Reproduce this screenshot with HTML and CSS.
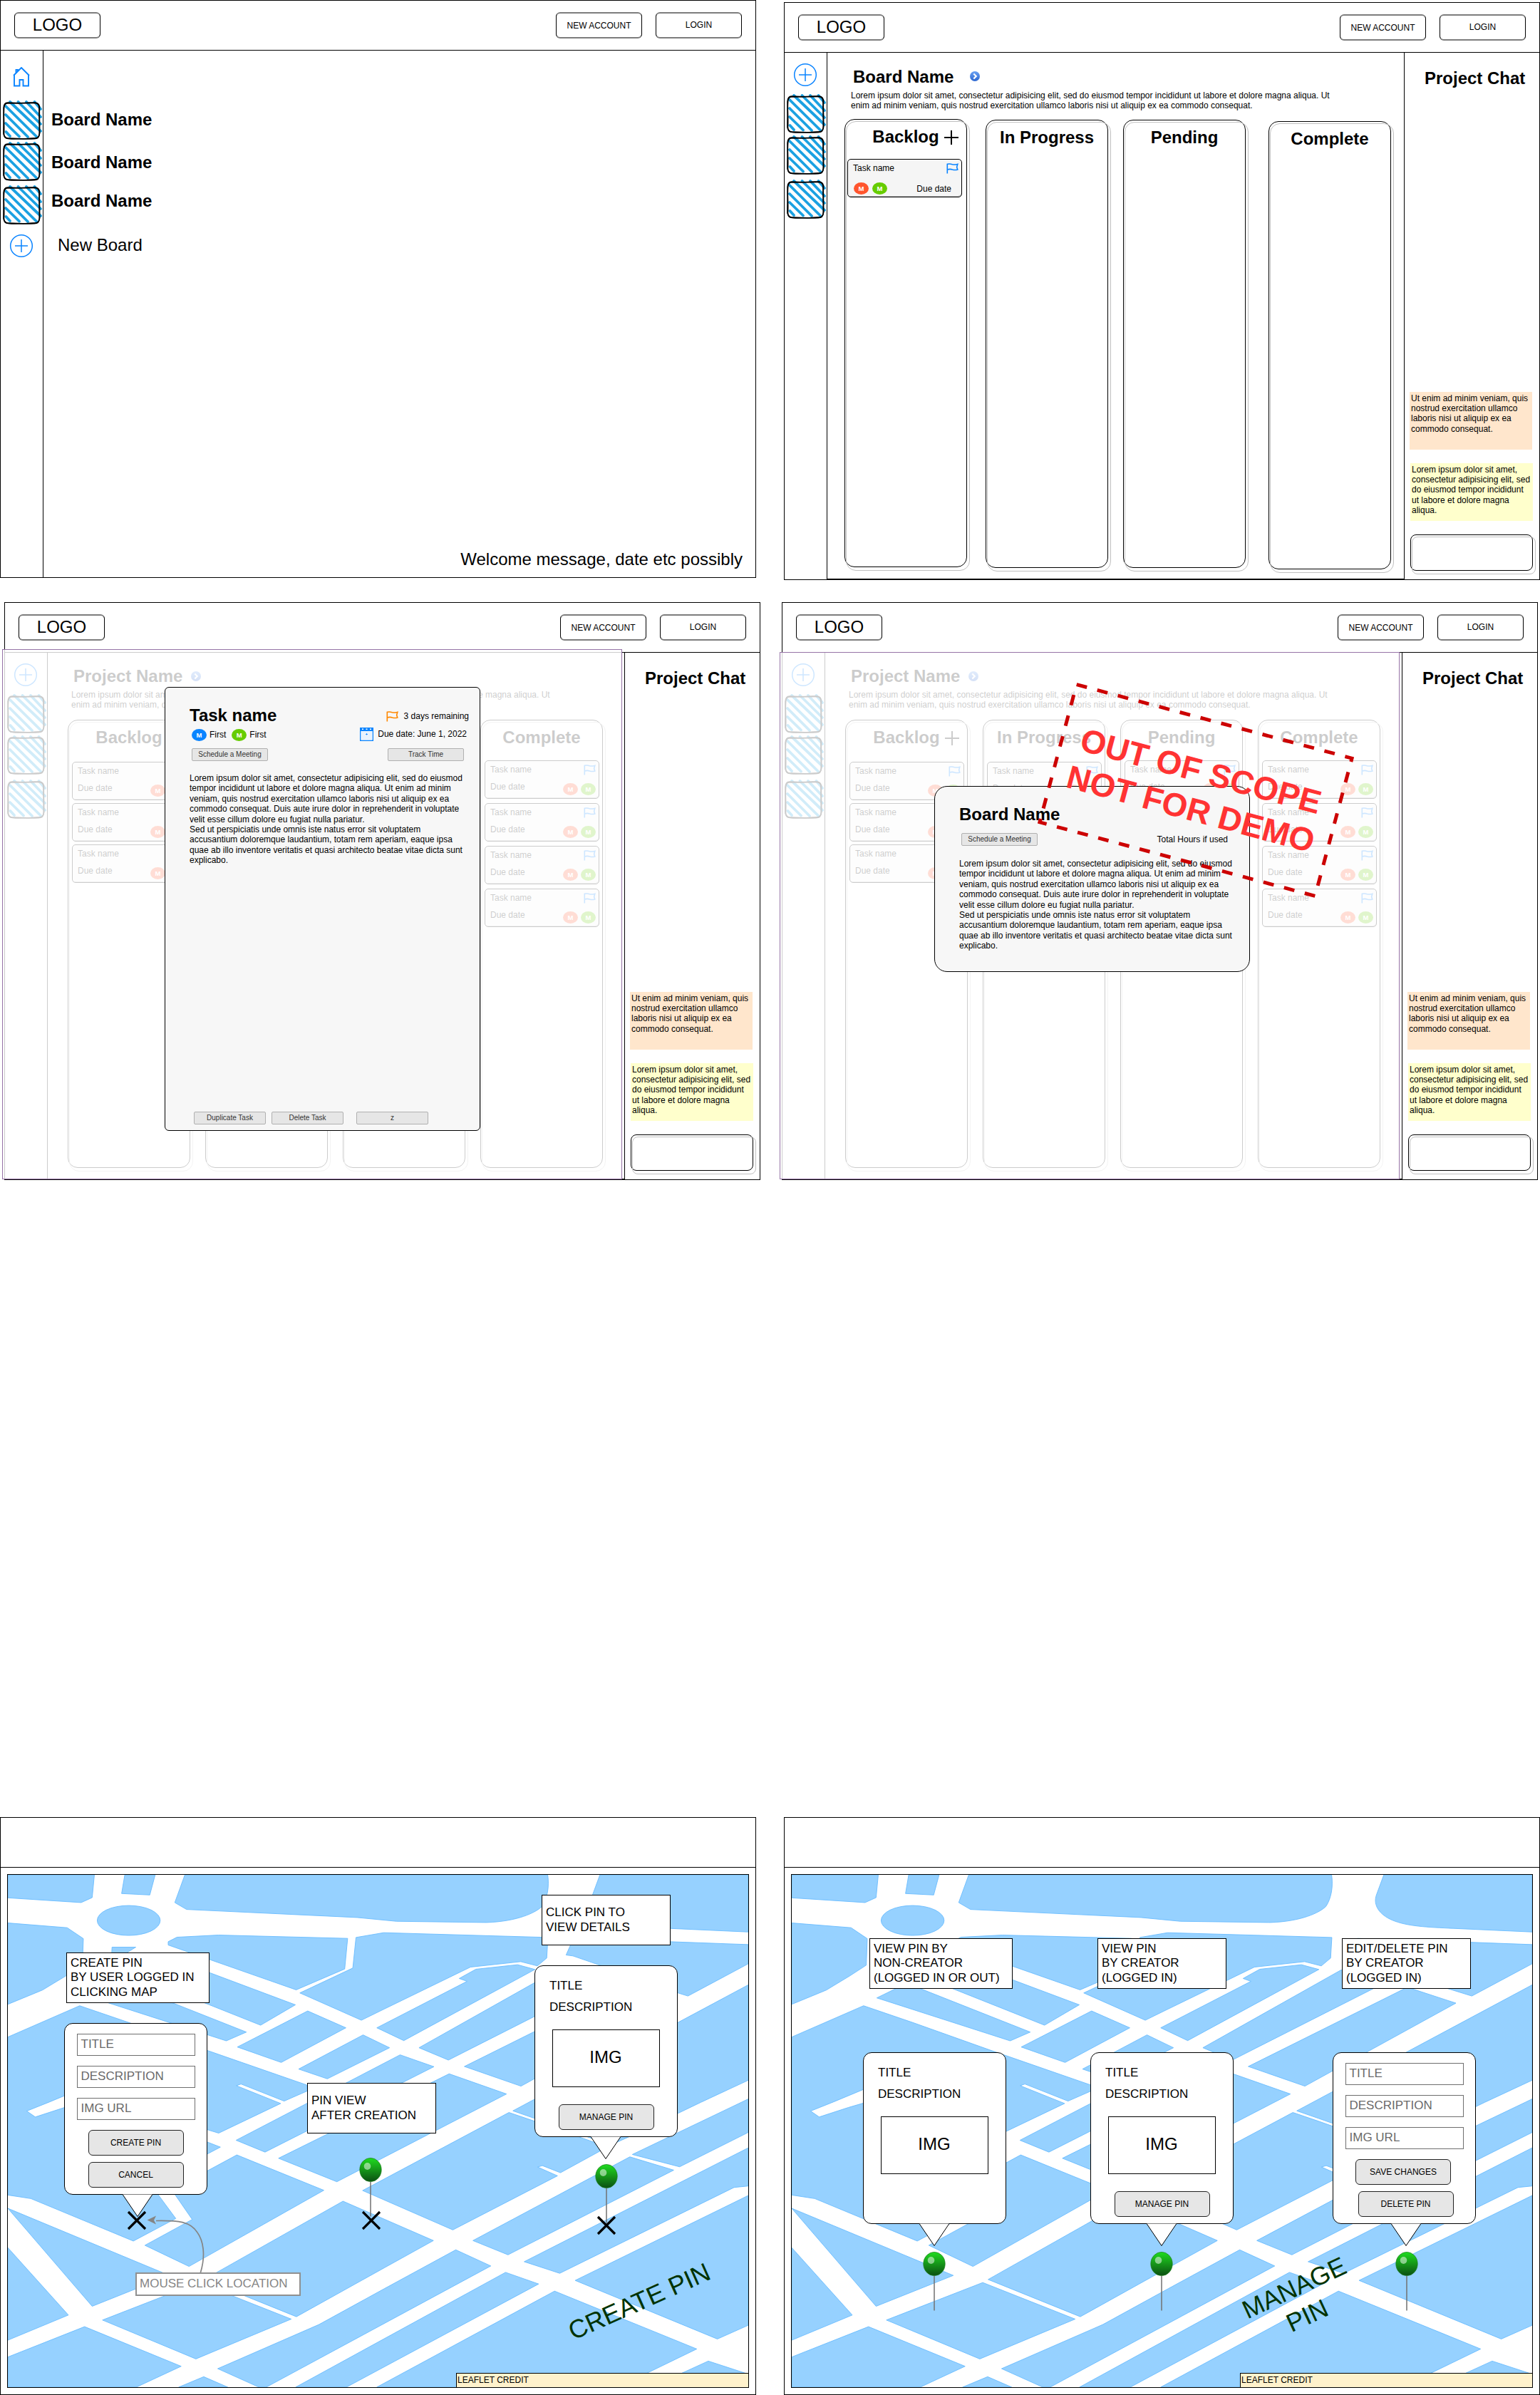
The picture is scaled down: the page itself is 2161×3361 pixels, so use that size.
FILE: index.html
```html
<!DOCTYPE html>
<html lang="en">
<head>
<meta charset="utf-8">
<title>Project board wireframes</title>
<link rel="stylesheet" href="styles.css">
</head>
<body>
<svg class="defs" width="0" height="0" aria-hidden="true">
  <defs>
    <linearGradient id="ball" x1="0" y1="0" x2="0" y2="1"><stop offset="0" stop-color="#1fdc1f"/><stop offset="1" stop-color="#0b4f12"/></linearGradient>
    <linearGradient id="blueball" x1="0" y1="0" x2="0" y2="1"><stop offset="0" stop-color="#6ba2f3"/><stop offset="1" stop-color="#2c66d0"/></linearGradient>
    <symbol id="i-plus" viewBox="0 0 34 34"><g fill="none" stroke="#0a84ff" stroke-width="1.5"><circle cx="17" cy="17" r="15.3"/><path d="M17 8v18M8 17h18"/></g></symbol>
    <symbol id="i-home" viewBox="0 0 24 28"><path d="M1 12 12 1 23 12M4.500 8.500V4H7V6M2 11.500V26.500H9.500V18H14.500V26.500H22V11.500" fill="none" stroke="#0a84ff" stroke-width="1.900"/></symbol>
    <symbol id="i-hatch" viewBox="-3 -3 58 58">
      <path d="M3.500 41 9 47M3 29 22 47.500M3 17 34 48M3 5 46 47.500M9 -1 52 40M20.500 -1 52 30M32 -1 52 20M43.500 -1 52 9" stroke="#1ba1e2" stroke-width="3.800" stroke-linecap="round" fill="none"/>
      <path d="M7 .8C22 1.600 34-.6 45 .5 49 1 50.600 3 50.400 8 49.600 20 51.300 32 50.200 44 50 48.500 48 50.600 43 50.500 30 51.600 18 50 6 50.200 2 50 .3 48 .4 43 1.300 30-.6 18 .6 7 .8 2.500 3 .3 7 .8Z" fill="none" stroke="#000" stroke-width="1.800"/>
      <path d="M6 0C20 .2 32 1.300 44 0 48.500 .4 49.700 3 49.800 7 50.800 19 49.600 31 50.800 43 50.300 48 47.500 50 43 50 30 50.300 18 51.600 8 50.800 3 50.500 1 48.500 0 44-.6 31 1.200 20 0 8 0 3 2 0 6 0Z" fill="none" stroke="#000" stroke-width="1.300"/>
    </symbol>
    <symbol id="i-go" viewBox="0 0 14 14"><circle cx="7" cy="7" r="7" fill="url(#blueball)"/><path d="M5.300 3.400 8.800 7 5.300 10.600" fill="none" stroke="#fff" stroke-width="2.200"/></symbol>
    <symbol id="i-flag" viewBox="0 0 17 15"><path d="M1.300 14.500V1.300C5 .4 6.500 1 8.500 1.700 11 2.500 13 2 15.800 1.400L14.600 5.400 15.800 9C13 9.800 11 9.800 8.500 9 6.500 8.300 4 8.200 1.300 9" fill="none" stroke="currentColor" stroke-width="1.600"/></symbol>
    <symbol id="i-cal" viewBox="0 0 19 19"><path d="M0 0H19V19H0ZM1.500 5V17.500H17.500V5Z" fill="#0a84ff" fill-rule="evenodd"/><path d="M1.500 5H17.500V17.500H1.500Z" fill="#e9f3fe"/><path d="M3 1.500h2v1.500H3zM8.500 1.500h2v1.500h-2zM14 1.500h2v1.500h-2z" fill="#fff"/><path d="M9.500 8V10.500M8 9.500H11" stroke="#0a84ff" stroke-width=".8"/></symbol>
    <symbol id="i-pin" viewBox="0 0 32 84"><path d="M16 34V82.500" stroke="#707070" stroke-width="1.500"/><ellipse cx="16" cy="17" rx="15.200" ry="16.600" fill="url(#ball)" stroke="#1a7d1a" stroke-width=".7"/><ellipse cx="11.500" cy="12" rx="4.800" ry="5" fill="#fff" fill-opacity=".5"/></symbol>
    <symbol id="i-x" viewBox="0 0 28 28"><path d="M2 2 26 26M26 2 2 26" stroke="#000" stroke-width="3.200"/></symbol>
    <symbol id="i-tip" viewBox="0 0 44 33"><path d="M1 .5 22 31.500 43 .5" fill="#fff" stroke="#000"/></symbol>
    <symbol id="map" viewBox="31 271 3020 2160" preserveAspectRatio="none">
      <g fill="#96d1ff" stroke="#66bbff" stroke-width="2.600">
        <path d="M31 271H384L375 367 330 388 31 368ZM508 271H632L610 356 495 350Z"/>
        <path d="M753 271 712 388 760 417 1456 451 1616 467 1982 472C2110 468 2185 430 2210 404 2232 370 2240 320 2233 271Z"/>
        <ellipse cx="524" cy="463.500" rx="128.500" ry="63"/>
        <path d="M31 474 273 494 339 540 335 652 268 697 172 757 31 817ZM456 576H553L453 640Z"/>
        <path d="M685 553 721 534 890 525 1417 539 1405 668 1207 756 685 567Z"/>
        <path d="M1451 535 1564 515 2234 535 2229 622 2191 655 2123 637 1918 660 1568 836 1473 884 1222 769 1438 664Z"/>
        <path d="M2446 271 2416 355C2400 400 2430 440 2480 462 2540 488 2620 492 2731 497L3051 512V271Z"/>
        <path d="M2338 539 2308 609 2336 613 2454 655 2680 742 2805 782 3051 646V565L2731 553Z"/>
        <path d="M1204 819 1062 905 600 715 700 624ZM378 790 922 971 1004 934 500 728Z"/>
        <path d="M31 955 324 823 528 895 843 1011 1250 1157 1253 1182 1158 1225 982 1153 963 1160 1144 1235 891 1360 843 1345 700 1290 500 1400 643 1618 716 1720 543 1815 125 1636 31 1621Z"/>
        <path d="M843 1397 898 1419 843 1449 800 1470 780 1375ZM700 1600 783 1724 590 1833 770 1922 1320 1601 965 1452 843 1520Z"/>
        <path fill="#fff" d="M500 1100 200 1229 108 1267 143 1292 262 1252 500 1180Z"/>
        <path d="M1254 845 1410 916 1146 1062 967 997ZM1480 946 1588 1000 1334 1131 1217 1090Z"/>
        <path d="M1536 916 1904 720 1872 708 1940 669 2110 650 2181 670 1646 970Z"/>
        <path d="M1708 1000 2272 672 2420 742 1828 1052ZM1893 1079 2542 745 2740 812 2124 1162Z"/>
        <path d="M962 1390 1631 1030 1769 1080 1080 1440ZM1135 1466 1831 1110 2065 1195 1373 1565Z"/>
        <path d="M1478 1602 2075 1273 2180 1310 2440 1405 2446 1436 2285 1527 2211 1497 2192 1503 2273 1540 1846 1768Z"/>
        <path d="M2091 1266 3051 735V1137L2858 1230 2568 1374 2490 1410 2180 1298Z"/>
        <path d="M2578 1450 3023 1230 3051 1216V1357L2771 1502ZM1928 1813 2568 1460 2747 1516 2071 1873Z"/>
        <path d="M3051 1422 2137 1902 2282 1951 2993 1589 3051 1583ZM3051 1623 2345 1981 2925 2228 3051 2170Z"/>
        <path d="M2261 2026 2841 2270 2520 2431H1536ZM2888 2321 3051 2376V2431H2655Z"/>
        <path d="M2061 1947 2196 1996 1412 2431H1205ZM1858 1852 2001 1920 1085 2431H1055L887 2353 1300 2167 1568 2015Z"/>
        <path d="M1398 1647 1767 1813 1568 1927 1208 2134 832 1977ZM810 1990 1187 2144 798 2312 417 2148Z"/>
        <path d="M31 1677 690 1960 375 2090ZM31 1843 278 2127 31 2233ZM31 2304 344 2176 738 2343 555 2431H31ZM830 2387 728 2431H928Z"/>
      </g>
    </symbol>
  </defs>
</svg>

<div class="row row-top">
  <section class="frame">
    <header class="bar"><div class="btn logo">LOGO</div><div class="btn push">NEW ACCOUNT</div><div class="btn login">LOGIN</div></header>
    <div class="body">
      <nav class="side home">
        <svg class="house"><use href="#i-home"/></svg>
        <svg class="sq"><use href="#i-hatch"/></svg><svg class="sq"><use href="#i-hatch"/></svg><svg class="sq"><use href="#i-hatch"/></svg>
        <svg class="add"><use href="#i-plus"/></svg>
      </nav>
      <main class="list">
        <h2>Board Name</h2><h2>Board Name</h2><h2>Board Name</h2>
        <p class="new">New Board</p>
        <p class="welcome">Welcome message, date etc possibly</p>
      </main>
    </div>
  </section>

  <section class="frame second">
    <header class="bar"><div class="btn logo">LOGO</div><div class="btn push">NEW ACCOUNT</div><div class="btn login">LOGIN</div></header>
    <div class="body">
      <nav class="side">
        <svg class="add"><use href="#i-plus"/></svg>
        <svg class="sq"><use href="#i-hatch"/></svg><svg class="sq"><use href="#i-hatch"/></svg><svg class="sq"><use href="#i-hatch"/></svg>
      </nav>
      <main class="board live">
        <h2 class="name">Board Name<svg class="go"><use href="#i-go"/></svg></h2>
        <p class="desc">Lorem ipsum dolor sit amet, consectetur adipisicing elit, sed do eiusmod tempor incididunt ut labore et dolore magna aliqua. Ut<br>enim ad minim veniam, quis nostrud exercitation ullamco laboris nisi ut aliquip ex ea commodo consequat.</p>
        <div class="cols">
          <div class="col"><h2>Backlog</h2><svg class="cross" viewBox="0 0 20 20"><path d="M10 0V20M0 10H20" stroke="#000" stroke-width="2"/></svg>
            <article class="card wide"><div class="r1">Task name<svg class="flag"><use href="#i-flag"/></svg></div><div class="r2"><i class="av red">M</i><i class="av green">M</i><span>Due date</span></div></article>
          </div>
          <div class="col"><h2>In Progress</h2></div>
          <div class="col"><h2>Pending</h2></div>
          <div class="col"><h2>Complete</h2></div>
        </div>
      </main>
      <aside class="chat">
        <h2>Project Chat</h2>
        <p class="msg peach">Ut enim ad minim veniam, quis<br>nostrud exercitation ullamco<br>laboris nisi ut aliquip ex ea<br>commodo consequat.</p>
        <p class="msg lemon">Lorem ipsum dolor sit amet,<br>consectetur adipisicing elit, sed<br>do eiusmod tempor incididunt<br>ut labore et dolore magna<br>aliqua.</p>
        <div class="entry"></div>
      </aside>
    </div>
  </section>
</div>

<div class="row row-mid">
  <section class="frame">
    <header class="bar"><div class="btn logo">LOGO</div><div class="btn push">NEW ACCOUNT</div><div class="btn login">LOGIN</div></header>
    <div class="body">
      <nav class="side">
        <svg class="add"><use href="#i-plus"/></svg>
        <svg class="sq"><use href="#i-hatch"/></svg><svg class="sq"><use href="#i-hatch"/></svg><svg class="sq"><use href="#i-hatch"/></svg>
      </nav>
      <main class="board">
        <h2 class="name">Project Name<svg class="go"><use href="#i-go"/></svg></h2>
        <p class="desc">Lorem ipsum dolor sit amet, consectetur adipisicing elit, sed do eiusmod tempor incididunt ut labore et dolore magna aliqua. Ut<br>enim ad minim veniam, quis nostrud exercitation ullamco laboris nisi ut aliquip ex ea commodo consequat.</p>
        <div class="cols">
          <div class="col tight"><h2>Backlog</h2>
            <article class="card"><div class="r1">Task name</div><div class="r2"><span>Due date</span><i class="av red">M</i><i class="av green">M</i></div></article>
            <article class="card"><div class="r1">Task name</div><div class="r2"><span>Due date</span><i class="av red">M</i><i class="av green">M</i></div></article>
            <article class="card"><div class="r1">Task name</div><div class="r2"><span>Due date</span><i class="av red">M</i><i class="av green">M</i></div></article>
          </div>
          <div class="col"></div>
          <div class="col"></div>
          <div class="col"><h2>Complete</h2>
            <article class="card"><div class="r1">Task name<svg class="flag"><use href="#i-flag"/></svg></div><div class="r2"><span>Due date</span><i class="av red">M</i><i class="av green">M</i></div></article>
            <article class="card"><div class="r1">Task name<svg class="flag"><use href="#i-flag"/></svg></div><div class="r2"><span>Due date</span><i class="av red">M</i><i class="av green">M</i></div></article>
            <article class="card"><div class="r1">Task name<svg class="flag"><use href="#i-flag"/></svg></div><div class="r2"><span>Due date</span><i class="av red">M</i><i class="av green">M</i></div></article>
            <article class="card"><div class="r1">Task name<svg class="flag"><use href="#i-flag"/></svg></div><div class="r2"><span>Due date</span><i class="av red">M</i><i class="av green">M</i></div></article>
          </div>
        </div>
      </main>
      <aside class="chat">
        <h2>Project Chat</h2>
        <p class="msg peach">Ut enim ad minim veniam, quis<br>nostrud exercitation ullamco<br>laboris nisi ut aliquip ex ea<br>commodo consequat.</p>
        <p class="msg lemon">Lorem ipsum dolor sit amet,<br>consectetur adipisicing elit, sed<br>do eiusmod tempor incididunt<br>ut labore et dolore magna<br>aliqua.</p>
        <div class="entry"></div>
      </aside>
    </div>
    <div class="veil"></div>
    <div class="modal task">
      <div class="m1"><h2>Task name</h2><span class="meta"><svg class="flag orange"><use href="#i-flag"/></svg>3 days remaining</span></div>
      <div class="m2"><i class="av blue">M</i><span class="who">First</span><i class="av green">M</i><span class="who">First</span><span class="meta"><svg class="cal"><use href="#i-cal"/></svg>Due date: June 1, 2022</span></div>
      <div class="m3"><div class="mini">Schedule a Meeting</div><div class="mini">Track Time</div></div>
      <p>Lorem ipsum dolor sit amet, consectetur adipisicing elit, sed do eiusmod<br>tempor incididunt ut labore et dolore magna aliqua. Ut enim ad minim<br>veniam, quis nostrud exercitation ullamco laboris nisi ut aliquip ex ea<br>commodo consequat. Duis aute irure dolor in reprehenderit in voluptate<br>velit esse cillum dolore eu fugiat nulla pariatur.<br>Sed ut perspiciatis unde omnis iste natus error sit voluptatem<br>accusantium doloremque laudantium, totam rem aperiam, eaque ipsa<br>quae ab illo inventore veritatis et quasi architecto beatae vitae dicta sunt<br>explicabo.</p>
      <div class="m4"><div class="mini">Duplicate Task</div><div class="mini">Delete Task</div><div class="mini">z</div></div>
    </div>
  </section>

  <section class="frame second">
    <header class="bar"><div class="btn logo">LOGO</div><div class="btn push">NEW ACCOUNT</div><div class="btn login">LOGIN</div></header>
    <div class="body">
      <nav class="side">
        <svg class="add"><use href="#i-plus"/></svg>
        <svg class="sq"><use href="#i-hatch"/></svg><svg class="sq"><use href="#i-hatch"/></svg><svg class="sq"><use href="#i-hatch"/></svg>
      </nav>
      <main class="board">
        <h2 class="name">Project Name<svg class="go"><use href="#i-go"/></svg></h2>
        <p class="desc">Lorem ipsum dolor sit amet, consectetur adipisicing elit, sed do eiusmod tempor incididunt ut labore et dolore magna aliqua. Ut<br>enim ad minim veniam, quis nostrud exercitation ullamco laboris nisi ut aliquip ex ea commodo consequat.</p>
        <div class="cols">
          <div class="col tight"><h2>Backlog</h2><svg class="cross" viewBox="0 0 20 20"><path d="M10 0V20M0 10H20" stroke="#000" stroke-width="2"/></svg>
            <article class="card"><div class="r1">Task name<svg class="flag"><use href="#i-flag"/></svg></div><div class="r2"><span>Due date</span><i class="av red">M</i><i class="av green">M</i></div></article>
            <article class="card"><div class="r1">Task name</div><div class="r2"><span>Due date</span><i class="av red">M</i><i class="av green">M</i></div></article>
            <article class="card"><div class="r1">Task name</div><div class="r2"><span>Due date</span><i class="av red">M</i><i class="av green">M</i></div></article>
          </div>
          <div class="col tight"><h2>In Progress</h2>
            <article class="card"><div class="r1">Task name<svg class="flag"><use href="#i-flag"/></svg></div><div class="r2"><span>Due date</span><i class="av red">M</i><i class="av green">M</i></div></article>
          </div>
          <div class="col"><h2>Pending</h2>
            <article class="card"><div class="r1">Task name<svg class="flag"><use href="#i-flag"/></svg></div><div class="r2"><span>Due date</span><i class="av red">M</i><i class="av green">M</i></div></article>
          </div>
          <div class="col"><h2>Complete</h2>
            <article class="card"><div class="r1">Task name<svg class="flag"><use href="#i-flag"/></svg></div><div class="r2"><span>Due date</span><i class="av red">M</i><i class="av green">M</i></div></article>
            <article class="card"><div class="r1">Task name<svg class="flag"><use href="#i-flag"/></svg></div><div class="r2"><span>Due date</span><i class="av red">M</i><i class="av green">M</i></div></article>
            <article class="card"><div class="r1">Task name<svg class="flag"><use href="#i-flag"/></svg></div><div class="r2"><span>Due date</span><i class="av red">M</i><i class="av green">M</i></div></article>
            <article class="card"><div class="r1">Task name<svg class="flag"><use href="#i-flag"/></svg></div><div class="r2"><span>Due date</span><i class="av red">M</i><i class="av green">M</i></div></article>
          </div>
        </div>
      </main>
      <aside class="chat">
        <h2>Project Chat</h2>
        <p class="msg peach">Ut enim ad minim veniam, quis<br>nostrud exercitation ullamco<br>laboris nisi ut aliquip ex ea<br>commodo consequat.</p>
        <p class="msg lemon">Lorem ipsum dolor sit amet,<br>consectetur adipisicing elit, sed<br>do eiusmod tempor incididunt<br>ut labore et dolore magna<br>aliqua.</p>
        <div class="entry"></div>
      </aside>
    </div>
    <div class="veil low"></div>
    <div class="modal info">
      <h2>Board Name</h2>
      <div class="m3"><div class="mini">Schedule a Meeting</div><span>Total Hours if used</span></div>
      <p>Lorem ipsum dolor sit amet, consectetur adipisicing elit, sed do eiusmod<br>tempor incididunt ut labore et dolore magna aliqua. Ut enim ad minim<br>veniam, quis nostrud exercitation ullamco laboris nisi ut aliquip ex ea<br>commodo consequat. Duis aute irure dolor in reprehenderit in voluptate<br>velit esse cillum dolore eu fugiat nulla pariatur.<br>Sed ut perspiciatis unde omnis iste natus error sit voluptatem<br>accusantium doloremque laudantium, totam rem aperiam, eaque ipsa<br>quae ab illo inventore veritatis et quasi architecto beatae vitae dicta sunt<br>explicabo.</p>
    </div>
    <div class="stamp"><svg viewBox="0 0 400 200"><rect x="0" y="0" width="400" height="200" fill="none" stroke="#c00" stroke-width="5" stroke-dasharray="15 15"/></svg><b>OUT OF SCOPE<br>NOT FOR DEMO</b></div>
  </section>
</div>

<div class="row row-maps">
  <section class="frame">
    <header class="bar"></header>
    <div class="map">
      <svg class="ground"><use href="#map"/></svg>
      <div class="note n-create">CREATE PIN<br>BY USER LOGGED IN<br>CLICKING MAP</div>
      <div class="note n-view">PIN VIEW<br>AFTER CREATION</div>
      <div class="note n-click">CLICK PIN TO<br>VIEW DETAILS</div>
      <div class="bubble b-create">
        <div class="field">TITLE</div><div class="field">DESCRIPTION</div><div class="field">IMG URL</div>
        <div class="act">CREATE PIN</div><div class="act">CANCEL</div>
        <svg class="tip"><use href="#i-tip"/></svg>
      </div>
      <svg class="pin p-one"><use href="#i-pin"/></svg>
      <svg class="pin p-two"><use href="#i-pin"/></svg>
      <svg class="mark x-one"><use href="#i-x"/></svg>
      <svg class="mark x-two"><use href="#i-x"/></svg>
      <svg class="mark x-three"><use href="#i-x"/></svg>
      <div class="bubble b-show">
        <span>TITLE</span><span>DESCRIPTION</span><div class="img">IMG</div><div class="act">MANAGE PIN</div>
        <svg class="tip"><use href="#i-tip"/></svg>
      </div>
      <svg class="arrow" viewBox="0 0 90 84"><path d="M76.400 80.300C84 55 80 35 72 24 62 8 45 7 14 7.500" fill="none" stroke="#858585" stroke-width="1.700"/><path d="M1.500 6.500 14 .5 11 6.700 14 12.500Z" fill="#858585"/></svg>
      <div class="mouse">MOUSE CLICK LOCATION</div>
      <div class="caption c-create">CREATE PIN</div>
      <div class="credit">LEAFLET CREDIT</div>
    </div>
  </section>

  <section class="frame second">
    <header class="bar"></header>
    <div class="map">
      <svg class="ground"><use href="#map"/></svg>
      <div class="note n-a">VIEW PIN BY<br>NON-CREATOR<br>(LOGGED IN OR OUT)</div>
      <div class="note n-b">VIEW PIN<br>BY CREATOR<br>(LOGGED IN)</div>
      <div class="note n-c">EDIT/DELETE PIN<br>BY CREATOR<br>(LOGGED IN)</div>
      <div class="bubble b-a"><span>TITLE</span><span>DESCRIPTION</span><div class="img">IMG</div><svg class="tip"><use href="#i-tip"/></svg></div>
      <div class="bubble b-b"><span>TITLE</span><span>DESCRIPTION</span><div class="img">IMG</div><div class="act">MANAGE PIN</div><svg class="tip"><use href="#i-tip"/></svg></div>
      <div class="bubble b-c">
        <div class="field">TITLE</div><div class="field">DESCRIPTION</div><div class="field">IMG URL</div>
        <div class="act">SAVE CHANGES</div><div class="act">DELETE PIN</div>
        <svg class="tip"><use href="#i-tip"/></svg>
      </div>
      <svg class="pin p-a"><use href="#i-pin"/></svg>
      <svg class="pin p-b"><use href="#i-pin"/></svg>
      <svg class="pin p-c"><use href="#i-pin"/></svg>
      <div class="caption c-manage">MANAGE<br>PIN</div>
      <div class="credit">LEAFLET CREDIT</div>
    </div>
  </section>
</div>
</body>
</html>
```
FILE: styles.css
```css
* { box-sizing: border-box; }
body {
  margin: 0;
  width: 2161px;
  height: 3361px;
  overflow: hidden;
  background: #fff;
  color: #000;
  font: 12px/1.2 "Liberation Sans", Arial, Helvetica, sans-serif;
  white-space: nowrap;
}
h2, p { margin: 0; }
h2 { font-size: 24px; line-height: 29px; font-weight: 700; }
svg { display: block; flex: none; }
.defs { position: absolute; }

/* frames */
.row { display: flex; align-items: flex-start; }
.row-top { height: 845px; }
.row-mid { height: 1705px; padding-left: 6px; }
.row-maps { height: 811px; }
.frame {
  position: relative;
  flex: none;
  width: 1061px;
  height: 811px;
  border: 1px solid #000;
  display: flex;
  flex-direction: column;
}
.row-top .second { margin: 3px 0 0 39px; }
.row-mid .second { margin-left: 30px; }
.row-maps .second { margin-left: 39px; }
.bar {
  flex: none;
  height: 70px;
  padding: 16px 19px 0;
  display: flex;
  border-bottom: 1px solid #000;
}
.btn {
  width: 121px;
  height: 37px;
  border: 1px solid #000;
  border-width: 2px 1px;
  border-top-color: #7d7d7d;
  border-bottom-color: #7d7d7d;
  border-radius: 6px;
  text-align: center;
  line-height: 34px;
}
.logo { font-size: 24px; line-height: 32px; }
.push { margin-left: auto; }
.login { margin-left: 19px; line-height: 32px; }
.body { flex: 1; display: flex; }

/* sidebar */
.side { width: 60px; border-right: 1px solid #000; }
.sq { width: 58px; height: 58px; margin: 0 0 0 1px; }
.add { width: 34px; height: 34px; margin: 14px 0 10px 12px; }
.side .sq:nth-child(4) { margin-top: 4px; }
.home .house { width: 24px; height: 28px; margin: 23px 0 19px 17px; }
.home .sq:nth-child(4) { margin-top: 3px; }
.home .add { margin: 10px 0 0 12px; }
.list { flex: 1; display: flex; flex-direction: column; align-items: flex-start; padding: 82px 18px 11px 11px; }
.list h2:nth-child(2) { margin: 31px 0 25px; }
.list p { font-size: 24px; line-height: 29px; }
.new { margin: 33px 0 0 9px; }
.list .welcome { margin: auto 0 0; align-self: flex-end; }

/* board */
.board { width: 809px; border-bottom: 1px solid #000; padding-top: 18px; }
.name { display: flex; align-items: center; padding-left: 36px; }
.live .name { padding-top: 1px; }
.go { width: 14px; height: 14px; margin: 0 0 0 12px; }
.live .go { margin: -1px 0 0 23px; }
.desc { margin: 5px 0 0 33px; line-height: 14.4px; }
.cols { display: flex; gap: 21px; margin: 13px 0 0 28px; }
.live .cols { margin: 11.5px 0 0 24px; gap: 0; }
.live .col:nth-child(2) { margin: .5px 21px 0 26px; }
.live .col:nth-child(3) { margin: .5px 32px 0 0; }
.live .col:nth-child(4) { margin-top: 3px; }
.col {
  position: relative;
  width: 172px;
  height: 629px;
  flex: none;
  border: 1px solid #000;
  border-radius: 14px;
  padding: 9px 4px 0;
  background: #fff;
}
/* offset outline that doubles the box edge */
.col::before, .entry::before {
  content: "";
  position: absolute;
  left: 1px;
  top: 2px;
  width: 172px;
  height: 629px;
  border: 1px solid #c0c0c0;
  border-radius: 14px;
}
.col h2 { text-align: center; margin-bottom: 18px; }
.cross { position: absolute; left: 139px; top: 15px; width: 20px; height: 20px; }
.card {
  position: relative;
  width: 161px;
  height: 54px;
  margin: 0 0 6px 1px;
  border: 1px solid #000;
  border-radius: 5px;
  background: #f5f5f5;
  padding: 5px 4px 0 7px;
  box-shadow: inset -1px -2px 0 -1px #bbb;
}
.tight h2 { margin-bottom: 20px; }
.tight .card { margin-bottom: 4px; }
.live .card { margin-left: -1px; margin-top: -1px; }
.r1 { display: flex; height: 24px; justify-content: space-between; line-height: 14.4px; }
.r2 { display: flex; align-items: center; height: 17px; }
.r2 span { margin: -3px auto 0 0; }
.r2 .av { margin: 4px 0 0 4px; }
.live .r2 { padding: 3px 0 0; height: 20px; }
.live .r2 .av { margin: 0 4px 0 1px; }
.live .r2 span { margin: 0 10px 0 auto; }
.flag { width: 17px; height: 15px; color: #0a84ff; }
.av {
  width: 21px;
  height: 17px;
  border-radius: 50%;
  color: #fff;
  font: bold 9.5px/18px "Liberation Sans", Arial, sans-serif;
  text-align: center;
  flex: none;
}
.red { background: #ff552d; }
.green { background: #66cc00; }
.blue { background: #0a84ff; }

/* chat */
.chat { flex: 1; border-left: 1px solid #000; display: flex; flex-direction: column; padding: 21px 9px 12px 7px; }
.chat h2 { padding-left: 21px; }
.msg { width: 172px; height: 81px; padding: 1.5px 2px; line-height: 14.4px; margin-bottom: 19px; }
.peach { background: #ffe6cc; margin-top: auto; }
.lemon { background: #ffffcc; margin-left: 1px; }
.entry { position: relative; width: 172px; height: 51px; margin-left: 1px; border: 1px solid #000; border-radius: 8px; }
.entry::before { height: 51px; border-radius: 8px; }

/* overlays */
.veil { position: absolute; left: -4px; top: 65px; width: 870px; height: 744px; border: 1px solid #9673a6; background: rgba(255,255,255,.8); }
.veil.low { top: 69px; height: 740px; }
.modal { position: absolute; width: 443px; background: #f7f7f7; border: 1px solid #000; }
.modal p { line-height: 14.4px; }
.task { left: 224px; top: 118px; height: 623px; border-radius: 6px; padding: 24px 15px 0 34px; }
.m1, .m2, .m3, .m4 { display: flex; align-items: center; }
.m1 { justify-content: space-between; }
.m2 { height: 19px; margin: 4px 3px 0 3px; }
.meta { display: flex; align-items: center; margin-left: auto; }
.m1 .meta { margin-top: 3px; }
.m2 .meta { margin-top: -2px; }
.orange { color: #ff8800; margin-right: 8px; }
.cal { width: 19px; height: 19px; margin-right: 6px; }
.who { margin: 0 8px 0 4px; }
.m3 { margin: 9px 7px 17px 3px; justify-content: space-between; }
.mini {
  width: 107px;
  height: 18px;
  border: 1px solid #b0b0b0;
  border-radius: 2px;
  background: #e6e6e6;
  color: #333;
  font-size: 10px;
  line-height: 16px;
  text-align: center;
}
.m4 { margin: 345px 0 0 6px; gap: 8px; }
.m4 .mini { width: 101px; }
.m4 .mini:last-child { margin-left: 10px; }
.info { left: 213px; top: 257px; height: 261px; border-radius: 18px; padding: 24px 15px 0 34px; }
.info .m3 { margin: 12px 15px 18px 3px; }
.stamp {
  position: absolute;
  left: 380px;
  top: 163px;
  width: 400px;
  height: 200px;
  transform: rotate(15deg);
  display: grid;
  place-items: center;
  text-align: center;
  color: #ff3333;
  font-size: 46px;
  line-height: 55px;
}
.stamp svg { position: absolute; inset: 0; width: 400px; height: 200px; overflow: visible; }

/* maps */
.map { position: relative; width: 1041px; height: 721px; margin: 9px 0 0 9px; border: 1px solid #000; background: #fff; }
.ground { width: 1039px; height: 719px; }
.note {
  position: absolute;
  width: 181px;
  height: 71px;
  padding-left: 5px;
  background: #fff;
  border: 1px solid #000;
  font-size: 17px;
  line-height: 20.4px;
  display: flex;
  align-items: center;
}
.n-create { left: 82px; top: 109px; width: 201px; }
.n-view { left: 420px; top: 292px; }
.n-click { left: 749px; top: 28px; }
.n-a { left: 109px; top: 89px; width: 201px; }
.n-b { left: 429px; top: 89px; }
.n-c { left: 772px; top: 89px; }
.bubble {
  position: absolute;
  width: 201px;
  height: 241px;
  background: #fff;
  border: 1px solid #000;
  border-radius: 12px;
  display: flex;
  flex-direction: column;
  align-items: center;
  font-size: 17px;
  line-height: 20px;
}
.bubble span { align-self: flex-start; margin: 18px 0 0 20px; }
.bubble span + span { margin-top: 10px; }
.b-create, .b-c { padding-top: 14px; }
.b-create { left: 79px; top: 208px; }
.b-show { left: 739px; top: 127px; }
.b-a { left: 100px; top: 249px; }
.b-b { left: 419px; top: 249px; }
.b-c { left: 759px; top: 249px; }
.field { width: 166px; height: 31px; margin-bottom: 14px; padding: 4px 5px; border: 1px solid #6e6e6e; color: #6a6a6a; }
.img { width: 151px; height: 81px; margin: 21px 1px 0 0; border: 1px solid #000; font-size: 24px; line-height: 76px; text-align: center; }
.act {
  width: 134px;
  height: 36px;
  flex: none;
  margin-bottom: 9px;
  border: 1px solid #222;
  border-radius: 6px;
  background: #e6e6e6;
  font-size: 12px;
  line-height: 35px;
  text-align: center;
}
.b-show .act, .b-b .act { margin: 24px 0 0; }
.b-c .act:nth-child(4) { margin-right: 3px; }
.b-c .act:nth-child(5) { margin-left: 4px; }
.tip { position: absolute; left: 77px; top: 238.5px; width: 44px; height: 33px; }
.b-create .tip, .b-c .tip { left: 80px; }
.pin { position: absolute; width: 32px; height: 84px; }
.p-one { left: 493px; top: 397px; }
.p-two { left: 824px; top: 406px; }
.p-a { left: 184px; top: 529px; }
.p-b { left: 503px; top: 529px; }
.p-c { left: 847px; top: 529px; }
.mark { position: absolute; width: 28px; height: 28px; }
.x-one { left: 167px; top: 471px; }
.x-two { left: 496px; top: 471px; }
.x-three { left: 826px; top: 478px; }
.arrow { position: absolute; left: 194px; top: 478px; width: 90px; height: 84px; }
.mouse { position: absolute; left: 179px; top: 558px; width: 232px; height: 33px; border: 2px solid #909090; background: #fff; color: #858585; font-size: 17px; line-height: 28px; padding-left: 4px; }
.caption { position: absolute; color: #003300; font-size: 36px; line-height: 43px; text-align: center; }
.c-create { left: 778px; top: 577px; width: 216px; transform: rotate(-24deg); }
.c-manage { left: 634px; top: 556px; width: 160px; transform: rotate(-25deg); }
.credit { position: absolute; right: -1px; bottom: -1px; width: 411px; height: 21px; padding-left: 1px; background: #fff2cc; border: 1px solid #000; font-size: 12px; line-height: 18px; }
```
